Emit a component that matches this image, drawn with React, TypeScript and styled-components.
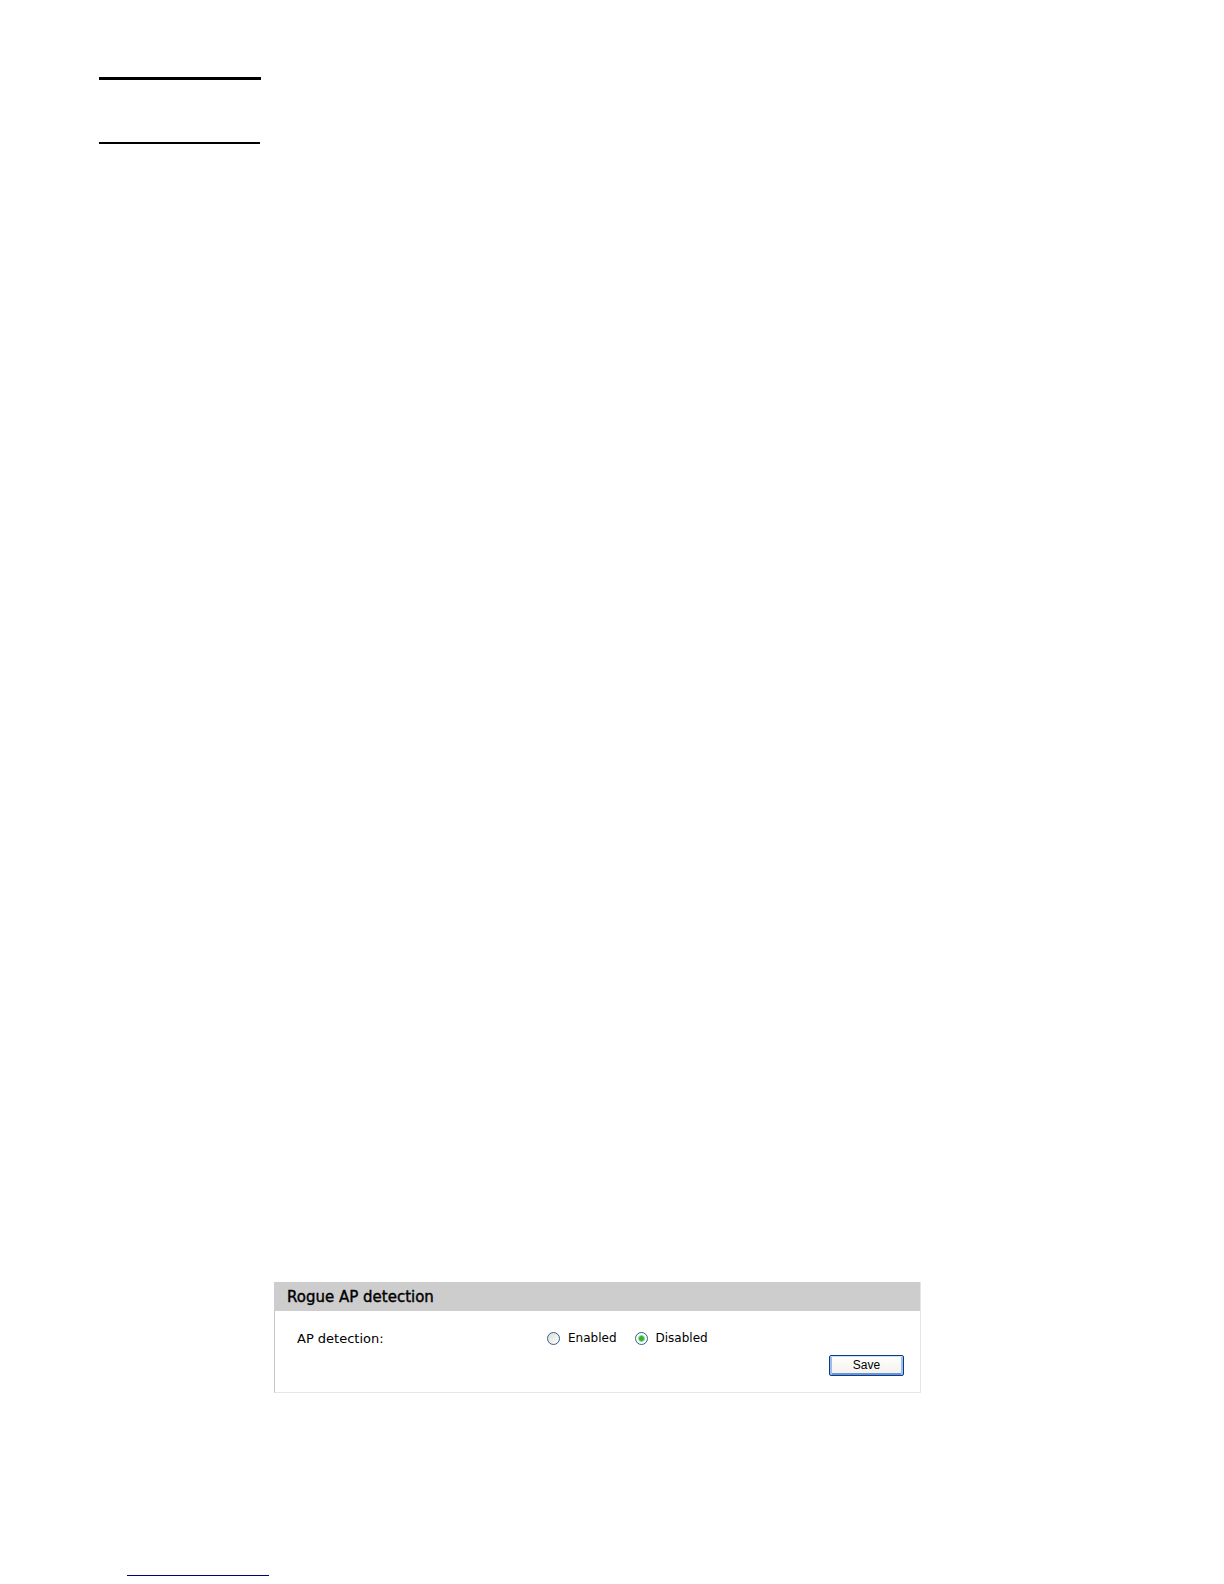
import { useState } from 'react';
import styled, { createGlobalStyle } from 'styled-components';

const GlobalStyle = createGlobalStyle`
  * { box-sizing: border-box; }
  body {
    margin: 0;
    background: #fff;
    color: #000;
    font-family: "DejaVu Sans", Verdana, sans-serif;
  }
`;

const Page = styled.main`
  display: flex;
  flex-direction: column;
  min-height: 100vh;
  padding: 77px 99px 8px;
`;

const Rules = styled.header`
  display: flex;
  flex-direction: column;
  gap: 62px;
`;

const Rule = styled.hr<{ $weight: number; $length: number }>`
  width: ${(p) => p.$length}px;
  height: ${(p) => p.$weight}px;
  margin: 0;
  border: 0;
  background: #000;
`;

const Panel = styled.form`
  width: 100%;
  max-width: 647px;
  margin: auto 0 182px 175px;
  border: 1px solid #e6e6e6;
  border-top: 0;
  border-left-color: #c8c8c8;
`;

const PanelTitle = styled.h2`
  margin: 0 0 0 -1px;
  padding: 2px 13px 0;
  background: #cdcdcd;
  font-size: 15px;
  font-weight: 400;
  line-height: 27px;
  -webkit-text-stroke: 0.4px #000;
`;

const PanelBody = styled.div`
  display: flex;
  flex-direction: column;
  gap: 8px;
  padding: 19px 16px 16px 22px;
`;

const Field = styled.div`
  display: grid;
  grid-template-columns: 250px 1fr;
  align-items: center;
  line-height: 17px;
`;

const FieldName = styled.span`
  font-size: 13px;
`;

const Options = styled.div`
  display: flex;
  gap: 18px;
`;

const Option = styled.label`
  display: flex;
  align-items: center;
  gap: 8px;
  font-size: 12px;
`;

const Radio = styled.input`
  appearance: none;
  width: 13px;
  height: 13px;
  margin: 0;
  border: 1px solid #31608c;
  border-radius: 50%;
  background: linear-gradient(135deg, #dcdcd7, #fff);

  &:checked {
    background: radial-gradient(circle, #2fb52f 0 2px, #fff 4px);
  }
`;

const SaveButton = styled.button`
  align-self: flex-end;
  width: 75px;
  height: 21px;
  padding: 0;
  border: 1px solid #0b3c7c;
  border-radius: 2px;
  background: linear-gradient(#fff, #f1f0ea);
  box-shadow: inset 0 1px #cee0fa, inset 2px 0 #9dbdf0, inset -2px 0 #9dbdf0, inset 0 -2px #6b92dc;
  color: #000;
  font: 12px/17px "Liberation Sans", Arial, sans-serif;
`;

const FooterRule = styled.hr`
  width: 142px;
  height: 1px;
  margin: 0 0 0 28px;
  border: 0;
  background: #000080;
`;

export default function App() {
  const [detection, setDetection] = useState('Disabled');

  return (
    <>
      <GlobalStyle />
      <Page>
        <Rules>
          <Rule $weight={3} $length={162} />
          <Rule $weight={2} $length={161} />
        </Rules>
        <Panel onSubmit={(e) => e.preventDefault()}>
          <PanelTitle>Rogue AP detection</PanelTitle>
          <PanelBody>
            <Field role="radiogroup" aria-labelledby="ap-detection">
              <FieldName id="ap-detection">AP detection:</FieldName>
              <Options>
                {['Enabled', 'Disabled'].map((value) => (
                  <Option key={value} htmlFor={value}>
                    <Radio
                      type="radio"
                      id={value}
                      name="detection"
                      value={value}
                      checked={detection === value}
                      onChange={() => setDetection(value)}
                    />
                    {value}
                  </Option>
                ))}
              </Options>
            </Field>
            <SaveButton type="submit">Save</SaveButton>
          </PanelBody>
        </Panel>
        <FooterRule />
      </Page>
    </>
  );
}
